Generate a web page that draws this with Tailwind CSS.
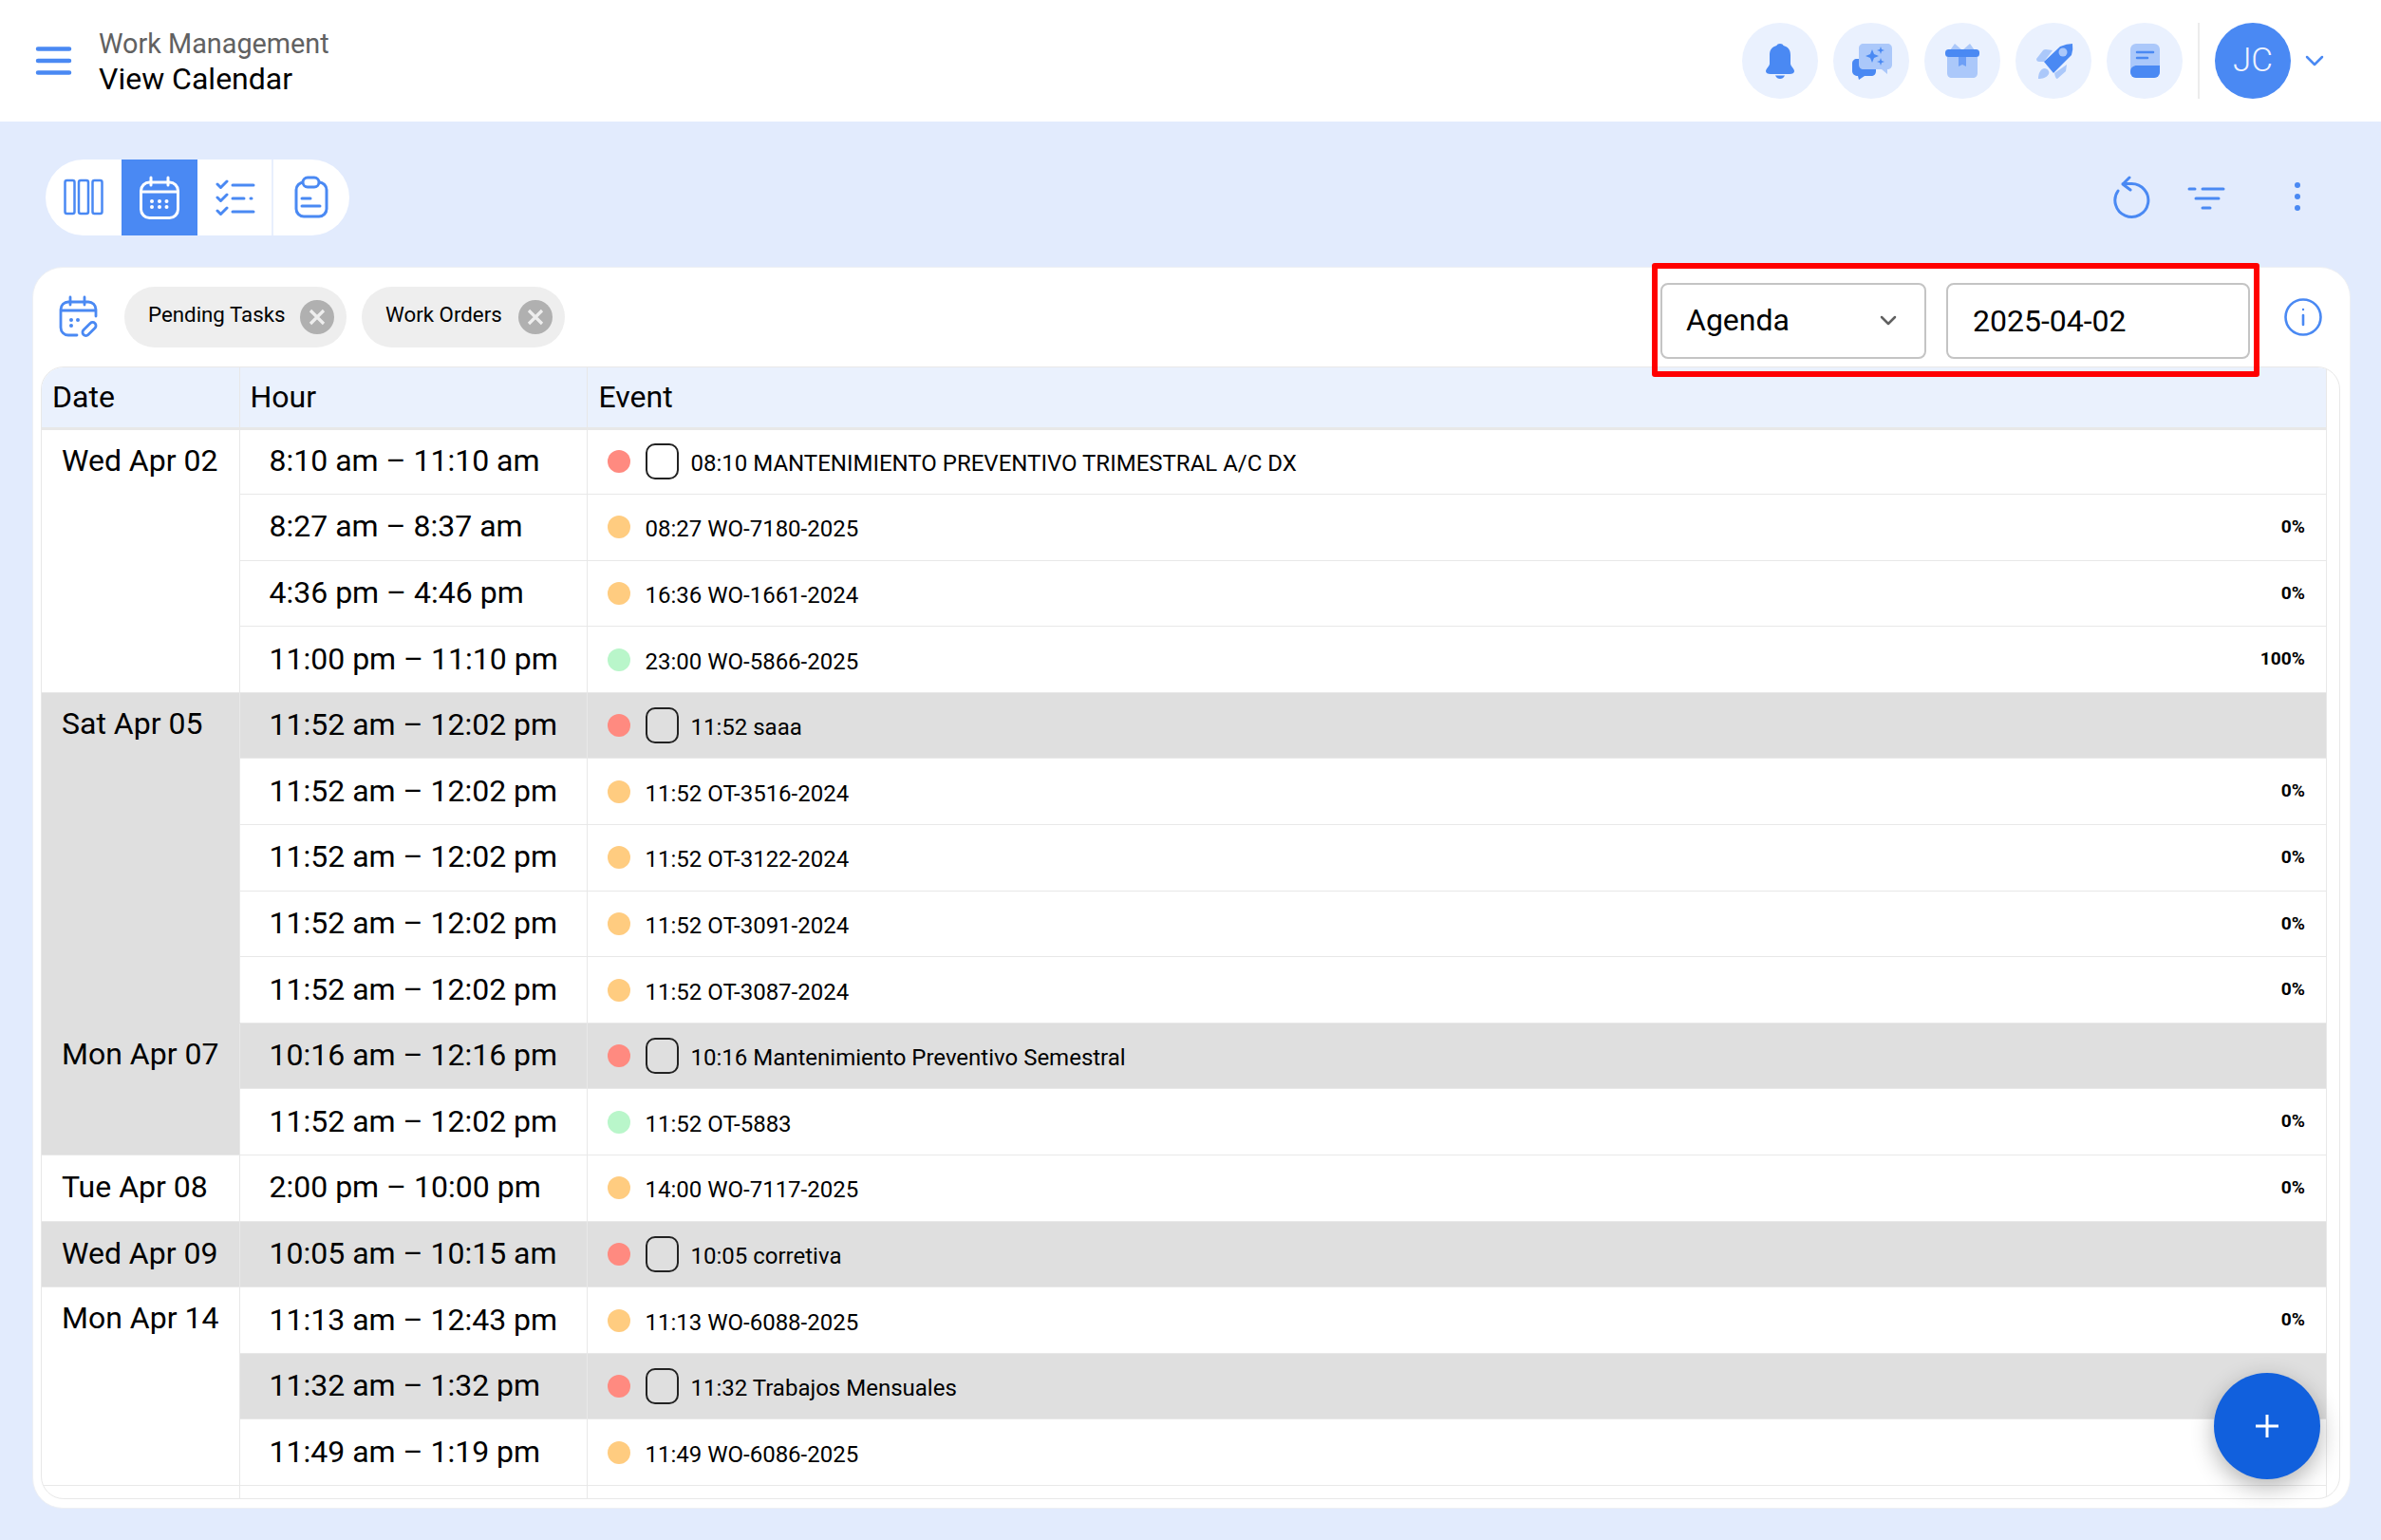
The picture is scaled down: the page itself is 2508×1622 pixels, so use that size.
<!DOCTYPE html>
<html lang="en">
<head>
    <meta charset="UTF-8">
    <title>View Calendar</title>
    <script src="https://cdn.jsdelivr.net/npm/@tailwindcss/browser@4"></script>
</head>
<body class="bg-[#e2ebfd] text-black font-['Roboto',sans-serif] h-[1622px] overflow-hidden">
    <header class="bg-white h-[128px] flex items-center justify-between pl-[36px] pr-[60px]">
        <div class="flex items-center gap-[28px]">
            <svg class="w-[40px] h-[40px]" viewBox="0 0 40 40" fill="none" stroke="#4a89f3" stroke-width="4.500" stroke-linecap="round"><path d="M4 7.500h33M4 20h33M4 32.500h33"/></svg>
            <div class="mt-[1px]">
                <div class="text-[28.800px] leading-[36px] text-[#616161]">Work Management</div>
                <div class="text-[32px] leading-[38px]">View Calendar</div>
            </div>
        </div>
        <div class="flex items-center">
            <div class="flex gap-4">
                <div class="w-20 h-20 rounded-full bg-[#eaf1fe] flex items-center justify-center">
                    <svg class="w-12 h-12" viewBox="0 0 48 48" fill="#4a89f3"><path d="M24 6c-2 0-3 .8-3.600 2C15 9.500 13 13 13 18v9c0 3-4 5-4 8 0 2 2 3 5 3h20c3 0 5-1 5-3 0-3-4-5-4-8v-9c0-5-2-8.500-7.400-10C27 6.800 26 6 24 6z"/><path d="M19 39.500h10c-1 2.500-3 3.500-5 3.500s-4-1-5-3.500z"/></svg>
                </div>
                <div class="w-20 h-20 rounded-full bg-[#eaf1fe] flex items-center justify-center">
                    <svg class="w-12 h-12" viewBox="0 0 48 48"><path fill="#4a89f3" d="M9 22h15c3 0 5 2 5 5v8c0 3-2 5-5 5h-7l-6 4-1-4c-3 0-6-2-6-5v-8c0-3 2-5 5-5z"/><path fill="#abc8fa" d="M16 6h25c3 0 5 2 5 5v17c0 3-2 5-5 5v5l-6-5H16c-3 0-5-2-5-5V11c0-3 2-5 5-5z"/><path fill="#4a89f3" d="M25 12l2 5 5 2-5 2-2 5-2-5-5-2 5-2zM34 9l1 3 3 1-3 1-1 3-1-3-3-1 3-1zM34 21l1 3 3 1-3 1-1 3-1-3-3-1 3-1z"/></svg>
                </div>
                <div class="w-20 h-20 rounded-full bg-[#eaf1fe] flex items-center justify-center">
                    <svg class="w-12 h-12" viewBox="0 0 48 48"><path fill="#abc8fa" d="M11 13l5-7 8 7 8-7 5 7zM8 20h32v17c0 3-2 5-5 5H13c-3 0-5-2-5-5z"/><path fill="#6d9ff6" d="M20 20h8v10l-4-2-4 2z"/><rect fill="#4a89f3" x="6" y="12" width="36" height="8" rx="3.500"/></svg>
                </div>
                <div class="w-20 h-20 rounded-full bg-[#eaf1fe] flex items-center justify-center">
                    <svg class="w-12 h-12" viewBox="0 0 48 48"><path fill="#abc8fa" d="M6 22l7-9q1-1 3-1l7 1-9 12H9q-3 0-3-3zM38 28l-1 7-9 8q-2 0-3-6zM15 32c4 1 5 4 4 6-2 4-7 5-11 5 0-5 2-11 7-11z"/><path fill="#4a89f3" d="M14 25L31 9q7-3 13-3 1 6-1 12L24 37z"/><circle fill="#abc8fa" cx="34" cy="15" r="4.500"/></svg>
                </div>
                <div class="w-20 h-20 rounded-full bg-[#eaf1fe] flex items-center justify-center">
                    <svg class="w-12 h-12" viewBox="0 0 48 48"><rect fill="#abc8fa" x="9" y="6" width="31" height="36" rx="6"/><path fill="#4a89f3" d="M9 36c0-5 3-7 7-7h24v7a6 6 0 0 1-6 6H15a6 6 0 0 1-6-6z"/><path stroke="#4a89f3" stroke-width="2.500" stroke-linecap="round" d="M16 15h17M16 21h11"/></svg>
                </div>
            </div>
            <div class="w-[2px] h-20 bg-[#ececec] ml-4 mr-4"></div>
            <div class="w-20 h-20 rounded-full bg-[#4a89f3] text-[#eef3fe] text-[35px] font-light flex items-center justify-center">JC</div>
            <svg class="w-[20px] h-[12px] ml-[15px]" viewBox="0 0 20 12" fill="none" stroke="#4a89f3" stroke-width="2.500" stroke-linecap="round" stroke-linejoin="round"><path d="M2 2l8 8 8-8"/></svg>
        </div>
    </header>

    <div class="h-[153px] flex items-start justify-between pt-[40px] pl-[48px] pr-[64px]">
        <div class="flex h-20 w-[320px] rounded-full bg-white overflow-hidden">
            <div class="w-20 flex items-center justify-center">
                <svg class="w-12 h-12" viewBox="0 0 48 48" fill="none" stroke="#4a89f3" stroke-width="2.500"><rect x="4.500" y="6" width="10" height="35" rx="2"/><rect x="19" y="6" width="10" height="35" rx="2"/><rect x="33.500" y="6" width="10" height="35" rx="2"/></svg>
            </div>
            <div class="w-20 bg-[#4a89f3] flex items-center justify-center">
                <svg class="w-12 h-12" viewBox="0 0 48 48" fill="none" stroke="#fff" stroke-width="3" stroke-linecap="round"><rect x="4.500" y="8" width="39" height="37.500" rx="9"/><path d="M4.500 18h39M15 3v8M33 3v8"/><g fill="#fff" stroke="none"><circle cx="16" cy="28" r="2"/><circle cx="24" cy="28" r="2"/><circle cx="31.500" cy="28" r="2"/><circle cx="16" cy="34" r="2"/><circle cx="24" cy="34" r="2"/><circle cx="31.500" cy="34" r="2"/></g></svg>
            </div>
            <div class="w-20 flex items-center justify-center border-r-2 border-[#e8effd]">
                <svg class="w-12 h-12 ml-[2px]" viewBox="0 0 48 48" fill="none" stroke="#4a89f3" stroke-width="3" stroke-linecap="round" stroke-linejoin="round"><path d="M21 11h22M21 25h12M40 25h1M21 39h22M5 10l3.500 3.500L15 7M5 24l3.500 3.500L15 21M5 38l3.500 3.500L15 35"/></svg>
            </div>
            <div class="w-20 flex items-center justify-center">
                <svg class="w-12 h-12" viewBox="0 0 48 48" fill="none" stroke="#4a89f3" stroke-width="3" stroke-linecap="round"><rect x="8" y="8" width="32" height="36" rx="8"/><rect x="15" y="3" width="17" height="10" rx="5" fill="#fff"/><path d="M14 25h9M14 33h19"/></svg>
            </div>
        </div>
        <div class="flex items-center h-[48px] mt-[16px]">
            <svg class="w-12 h-12" viewBox="0 0 48 48" fill="none" stroke="#4a89f3" stroke-width="3" stroke-linecap="round" stroke-linejoin="round"><path d="M10 17A17.500 17.500 0 1 0 24 9.500H15M22 3l-7 7 8 6"/></svg>
            <svg class="w-12 h-12 ml-[31px]" viewBox="0 0 48 48" fill="none" stroke="#4a89f3" stroke-width="3" stroke-linecap="round"><path d="M6 15h6M20 15h22M13 25h24M20 35h8"/></svg>
            <svg class="w-12 h-12 ml-12" viewBox="0 0 48 48" fill="#4a89f3"><circle cx="24" cy="11" r="3"/><circle cx="24" cy="23" r="3"/><circle cx="24" cy="35" r="3"/></svg>
        </div>
    </div>

    <main class="relative ml-[34px] mr-[32px] h-[1308px] bg-white rounded-[32px] border border-[#eef0f4]">
        <div class="absolute left-[1705px] top-[-5px] w-[640px] h-[120px] border-[6px] border-[#ff0000] rounded-[3px] z-10"></div>

        <div class="h-[104px] flex items-center pl-[25px]">
            <svg class="w-12 h-12" viewBox="0 0 48 48" fill="none" stroke="#4a89f3" stroke-width="2.800" stroke-linecap="round"><path d="M21 43H12a8 8 0 0 1-8-8V16a8 8 0 0 1 8-8h21a8 8 0 0 1 8 8v7M4 17h37M14 3v8M29 3v8"/><g fill="#4a89f3" stroke="none"><circle cx="15" cy="27" r="2"/><circle cx="22" cy="27" r="2"/><circle cx="15" cy="33" r="2"/></g><rect x="-3.500" y="-8.500" width="7" height="17" rx="3.500" transform="translate(34 36.500) rotate(45)"/></svg>
            <div class="ml-[23px] h-16 w-[234px] rounded-full bg-[#eeeeee] flex items-center justify-between pl-[25px] pr-[13px]">
                <span class="text-[22.300px] -translate-y-[2px]">Pending Tasks</span>
                <span class="w-9 h-9 rounded-full bg-[#b0b0b0] flex items-center justify-center">
                    <svg class="w-5 h-5" viewBox="0 0 20 20" stroke="#eeeeee" stroke-width="3.200"><path d="M3 3l14 14M17 3L3 17"/></svg>
                </span>
            </div>
            <div class="ml-4 h-16 w-[214px] rounded-full bg-[#eeeeee] flex items-center justify-between pl-[25px] pr-[13px]">
                <span class="text-[22.300px] -translate-y-[2px]">Work Orders</span>
                <span class="w-9 h-9 rounded-full bg-[#b0b0b0] flex items-center justify-center">
                    <svg class="w-5 h-5" viewBox="0 0 20 20" stroke="#eeeeee" stroke-width="3.200"><path d="M3 3l14 14M17 3L3 17"/></svg>
                </span>
            </div>
            <div class="ml-auto mt-[7px] w-[280px] h-20 rounded-[8px] border-2 border-[#c4c4c4] flex items-center justify-between pl-[25px] pr-[29px]">
                <span class="text-[32px] -translate-y-[1px]">Agenda</span>
                <svg class="w-[18px] h-[11px]" viewBox="0 0 18 11" fill="none" stroke="#616161" stroke-width="2.500" stroke-linecap="round" stroke-linejoin="round"><path d="M2 2l7 7 7-7"/></svg>
            </div>
            <div class="ml-[21px] mt-[7px] w-[320px] h-20 rounded-[8px] border-2 border-[#c4c4c4] flex items-center pl-[26px]">
                <span class="text-[32px]">2025-04-02</span>
            </div>
            <svg class="w-10 h-10 ml-[36px] mr-[29px]" viewBox="0 0 40 40" fill="none" stroke="#4a89f3" stroke-width="2.600" stroke-linecap="round"><circle cx="20" cy="20" r="18.500"/><path d="M20 18v10"/><circle cx="20" cy="12" r="1.200" fill="#4a89f3" stroke="none"/></svg>
        </div>

        <div class="ml-[8px] mr-[10px] h-[1193px] rounded-t-[24px] rounded-b-[24px] border border-[#e8e8e8] overflow-hidden">
            <table class="w-[2407px] table-fixed border-collapse text-[32px] [&_td]:border [&_td]:border-[#e8e8e8] [&_th]:border [&_th]:border-[#e8e8e8] [&_td]:p-0">
                <colgroup>
                    <col class="w-[208px]">
                    <col class="w-[366px]">
                    <col>
                </colgroup>
                <thead>
                    <tr class="h-[64px] bg-[#eaf1fd] font-normal text-left">
                        <th class="font-normal pl-[11px] border-l-0! border-t-0! border-b-[3px]!">Date</th>
                        <th class="font-normal pl-[11px] border-t-0! border-b-[3px]!">Hour</th>
                        <th class="font-normal pl-[12px] border-t-0! border-b-[3px]!">Event</th>
                    </tr>
                </thead>
                <tbody>
                    <tr class="h-[69.600px]">
                        <td rowspan="4" class="align-top pl-[21px]! pt-[8px]! border-l-0!">Wed Apr 02</td>
                        <td class="pl-[31px]! pb-[2px]!">8:10 am – 11:10 am</td>
                        <td><div class="flex items-center pl-[21px] pr-[22px] text-[24px]"><span class="w-6 h-6 rounded-full bg-[#ff8a80]"></span><span class="w-[35px] h-[38px] ml-4 rounded-[10px] border-2 border-[#222222]"></span><span class="ml-[13px] mt-1">08:10 MANTENIMIENTO PREVENTIVO TRIMESTRAL A/C DX</span></div></td>
                    </tr>
                    <tr class="h-[69.600px]">
                        <td class="pl-[31px]! pb-[2px]!">8:27 am – 8:37 am</td>
                        <td><div class="flex items-center pl-[21px] pr-[22px] text-[24px]"><span class="w-6 h-6 rounded-full bg-[#ffcc80]"></span><span class="ml-4 mt-1">08:27 WO-7180-2025</span><span class="ml-auto text-[19.200px] font-bold">0%</span></div></td>
                    </tr>
                    <tr class="h-[69.600px]">
                        <td class="pl-[31px]! pb-[2px]!">4:36 pm – 4:46 pm</td>
                        <td><div class="flex items-center pl-[21px] pr-[22px] text-[24px]"><span class="w-6 h-6 rounded-full bg-[#ffcc80]"></span><span class="ml-4 mt-1">16:36 WO-1661-2024</span><span class="ml-auto text-[19.200px] font-bold">0%</span></div></td>
                    </tr>
                    <tr class="h-[69.600px]">
                        <td class="pl-[31px]! pb-[2px]!">11:00 pm – 11:10 pm</td>
                        <td><div class="flex items-center pl-[21px] pr-[22px] text-[24px]"><span class="w-6 h-6 rounded-full bg-[#b9f6ca]"></span><span class="ml-4 mt-1">23:00 WO-5866-2025</span><span class="ml-auto text-[19.200px] font-bold">100%</span></div></td>
                    </tr>
                    <tr class="h-[69.600px] bg-[#dfdfdf]">
                        <td rowspan="5" class="align-top pl-[21px]! pt-[8px]! border-l-0! border-b-[#dfdfdf]! bg-[#dfdfdf]">Sat Apr 05</td>
                        <td class="pl-[31px]! pb-[2px]!">11:52 am – 12:02 pm</td>
                        <td><div class="flex items-center pl-[21px] pr-[22px] text-[24px]"><span class="w-6 h-6 rounded-full bg-[#ff8a80]"></span><span class="w-[35px] h-[38px] ml-4 rounded-[10px] border-2 border-[#222222]"></span><span class="ml-[13px] mt-1">11:52 saaa</span></div></td>
                    </tr>
                    <tr class="h-[69.600px]">
                        <td class="pl-[31px]! pb-[2px]!">11:52 am – 12:02 pm</td>
                        <td><div class="flex items-center pl-[21px] pr-[22px] text-[24px]"><span class="w-6 h-6 rounded-full bg-[#ffcc80]"></span><span class="ml-4 mt-1">11:52 OT-3516-2024</span><span class="ml-auto text-[19.200px] font-bold">0%</span></div></td>
                    </tr>
                    <tr class="h-[69.600px]">
                        <td class="pl-[31px]! pb-[2px]!">11:52 am – 12:02 pm</td>
                        <td><div class="flex items-center pl-[21px] pr-[22px] text-[24px]"><span class="w-6 h-6 rounded-full bg-[#ffcc80]"></span><span class="ml-4 mt-1">11:52 OT-3122-2024</span><span class="ml-auto text-[19.200px] font-bold">0%</span></div></td>
                    </tr>
                    <tr class="h-[69.600px]">
                        <td class="pl-[31px]! pb-[2px]!">11:52 am – 12:02 pm</td>
                        <td><div class="flex items-center pl-[21px] pr-[22px] text-[24px]"><span class="w-6 h-6 rounded-full bg-[#ffcc80]"></span><span class="ml-4 mt-1">11:52 OT-3091-2024</span><span class="ml-auto text-[19.200px] font-bold">0%</span></div></td>
                    </tr>
                    <tr class="h-[69.600px]">
                        <td class="pl-[31px]! pb-[2px]!">11:52 am – 12:02 pm</td>
                        <td><div class="flex items-center pl-[21px] pr-[22px] text-[24px]"><span class="w-6 h-6 rounded-full bg-[#ffcc80]"></span><span class="ml-4 mt-1">11:52 OT-3087-2024</span><span class="ml-auto text-[19.200px] font-bold">0%</span></div></td>
                    </tr>
                    <tr class="h-[69.600px] bg-[#dfdfdf]">
                        <td rowspan="2" class="align-top pl-[21px]! pt-[8px]! border-l-0! border-t-[#dfdfdf]! bg-[#dfdfdf]">Mon Apr 07</td>
                        <td class="pl-[31px]! pb-[2px]!">10:16 am – 12:16 pm</td>
                        <td><div class="flex items-center pl-[21px] pr-[22px] text-[24px]"><span class="w-6 h-6 rounded-full bg-[#ff8a80]"></span><span class="w-[35px] h-[38px] ml-4 rounded-[10px] border-2 border-[#222222]"></span><span class="ml-[13px] mt-1">10:16 Mantenimiento Preventivo Semestral</span></div></td>
                    </tr>
                    <tr class="h-[69.600px]">
                        <td class="pl-[31px]! pb-[2px]!">11:52 am – 12:02 pm</td>
                        <td><div class="flex items-center pl-[21px] pr-[22px] text-[24px]"><span class="w-6 h-6 rounded-full bg-[#b9f6ca]"></span><span class="ml-4 mt-1">11:52 OT-5883</span><span class="ml-auto text-[19.200px] font-bold">0%</span></div></td>
                    </tr>
                    <tr class="h-[69.600px]">
                        <td class="pl-[21px]! pb-[2px]! border-l-0!">Tue Apr 08</td>
                        <td class="pl-[31px]! pb-[2px]!">2:00 pm – 10:00 pm</td>
                        <td><div class="flex items-center pl-[21px] pr-[22px] text-[24px]"><span class="w-6 h-6 rounded-full bg-[#ffcc80]"></span><span class="ml-4 mt-1">14:00 WO-7117-2025</span><span class="ml-auto text-[19.200px] font-bold">0%</span></div></td>
                    </tr>
                    <tr class="h-[69.600px] bg-[#dfdfdf]">
                        <td class="pl-[21px]! pb-[2px]! border-l-0!">Wed Apr 09</td>
                        <td class="pl-[31px]! pb-[2px]!">10:05 am – 10:15 am</td>
                        <td><div class="flex items-center pl-[21px] pr-[22px] text-[24px]"><span class="w-6 h-6 rounded-full bg-[#ff8a80]"></span><span class="w-[35px] h-[38px] ml-4 rounded-[10px] border-2 border-[#222222]"></span><span class="ml-[13px] mt-1">10:05 corretiva</span></div></td>
                    </tr>
                    <tr class="h-[69.600px]">
                        <td rowspan="3" class="align-top pl-[21px]! pt-[8px]! border-l-0!">Mon Apr 14</td>
                        <td class="pl-[31px]! pb-[2px]!">11:13 am – 12:43 pm</td>
                        <td><div class="flex items-center pl-[21px] pr-[22px] text-[24px]"><span class="w-6 h-6 rounded-full bg-[#ffcc80]"></span><span class="ml-4 mt-1">11:13 WO-6088-2025</span><span class="ml-auto text-[19.200px] font-bold">0%</span></div></td>
                    </tr>
                    <tr class="h-[69.600px] bg-[#dfdfdf]">
                        <td class="pl-[31px]! pb-[2px]!">11:32 am – 1:32 pm</td>
                        <td><div class="flex items-center pl-[21px] pr-[22px] text-[24px]"><span class="w-6 h-6 rounded-full bg-[#ff8a80]"></span><span class="w-[35px] h-[38px] ml-4 rounded-[10px] border-2 border-[#222222]"></span><span class="ml-[13px] mt-1">11:32 Trabajos Mensuales</span></div></td>
                    </tr>
                    <tr class="h-[69.600px]">
                        <td class="pl-[31px]! pb-[2px]!">11:49 am – 1:19 pm</td>
                        <td><div class="flex items-center pl-[21px] pr-[22px] text-[24px]"><span class="w-6 h-6 rounded-full bg-[#ffcc80]"></span><span class="ml-4 mt-1">11:49 WO-6086-2025</span><span class="ml-auto text-[19.200px] font-bold">0%</span></div></td>
                    </tr>
                    <tr class="h-[69.600px]">
                        <td class="border-l-0!"></td>
                        <td></td>
                        <td></td>
                    </tr>
                </tbody>
            </table>
        </div>

        <button class="absolute right-[31px] bottom-[30px] w-[112px] h-[112px] rounded-full bg-[#1160dd] shadow-[0_8px_24px_rgba(0,0,0,0.3)] flex items-center justify-center z-20">
            <svg class="w-6 h-6" viewBox="0 0 24 24" stroke="#fff" stroke-width="3"><path d="M12 0v24M0 12h24"/></svg>
        </button>
    </main>
</body>
</html>
